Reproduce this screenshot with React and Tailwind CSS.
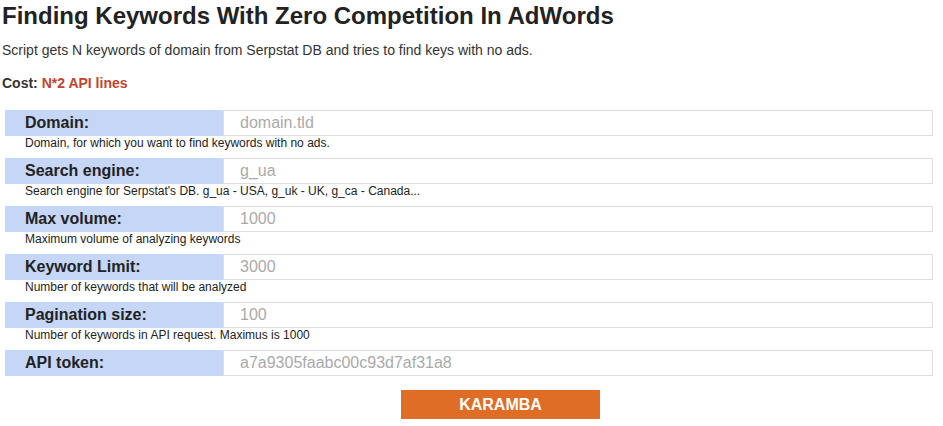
import React from 'react';

const fields = [
  { label: 'Domain:', value: 'domain.tld', hint: 'Domain, for which you want to find keywords with no ads.' },
  { label: 'Search engine:', value: 'g_ua', hint: "Search engine for Serpstat's DB. g_ua - USA, g_uk - UK, g_ca - Canada..." },
  { label: 'Max volume:', value: '1000', hint: 'Maximum volume of analyzing keywords' },
  { label: 'Keyword Limit:', value: '3000', hint: 'Number of keywords that will be analyzed' },
  { label: 'Pagination size:', value: '100', hint: 'Number of keywords in API request. Maximus is 1000' },
  { label: 'API token:', value: 'a7a9305faabc00c93d7af31a8', hint: null },
];

const Field = ({ label, value, hint }) => (
  <div className="h-[48px]">
    <div className="flex h-[26px]">
      <div className="w-[218px] bg-[#c5d6f7] pl-[20px] text-[16px] font-bold leading-[26px] text-[#222]">
        {label}
      </div>
      <input
        readOnly
        placeholder={value}
        className="flex-1 border border-[#dedede] px-[16px] text-[16px] leading-[24px] text-[#aaa] placeholder:text-[#aaa] outline-none"
      />
    </div>
    {hint && <p className="pl-[20px] text-[12px] leading-[14px] text-[#222]">{hint}</p>}
  </div>
);

export default function App() {
  return (
    <div className="bg-white px-[2px] pt-[2px] font-['Liberation_Sans',Arial,sans-serif]">
      <h1 className="text-[24px] font-bold leading-[28px] text-[#222]">
        Finding Keywords With Zero Competition In AdWords
      </h1>
      <p className="mt-[12px] text-[14px] leading-[16px] text-[#333]">
        Script gets N keywords of domain from Serpstat DB and tries to find keys with no ads.
      </p>
      <p className="mt-[17px] text-[14px] font-bold leading-[16px] text-[#333]">
        Cost: <span className="text-[#c2452b]">N*2 API lines</span>
      </p>
      <div className="ml-[3px] mr-[8px] mt-[19px]">
        {fields.map((f) => (
          <Field key={f.label} {...f} />
        ))}
      </div>
      <div className="mt-[-8px] pl-[399px]">
        <button className="h-[29px] w-[199px] bg-[#df6d26] text-[16px] font-bold text-white">
          KARAMBA
        </button>
      </div>
    </div>
  );
}
